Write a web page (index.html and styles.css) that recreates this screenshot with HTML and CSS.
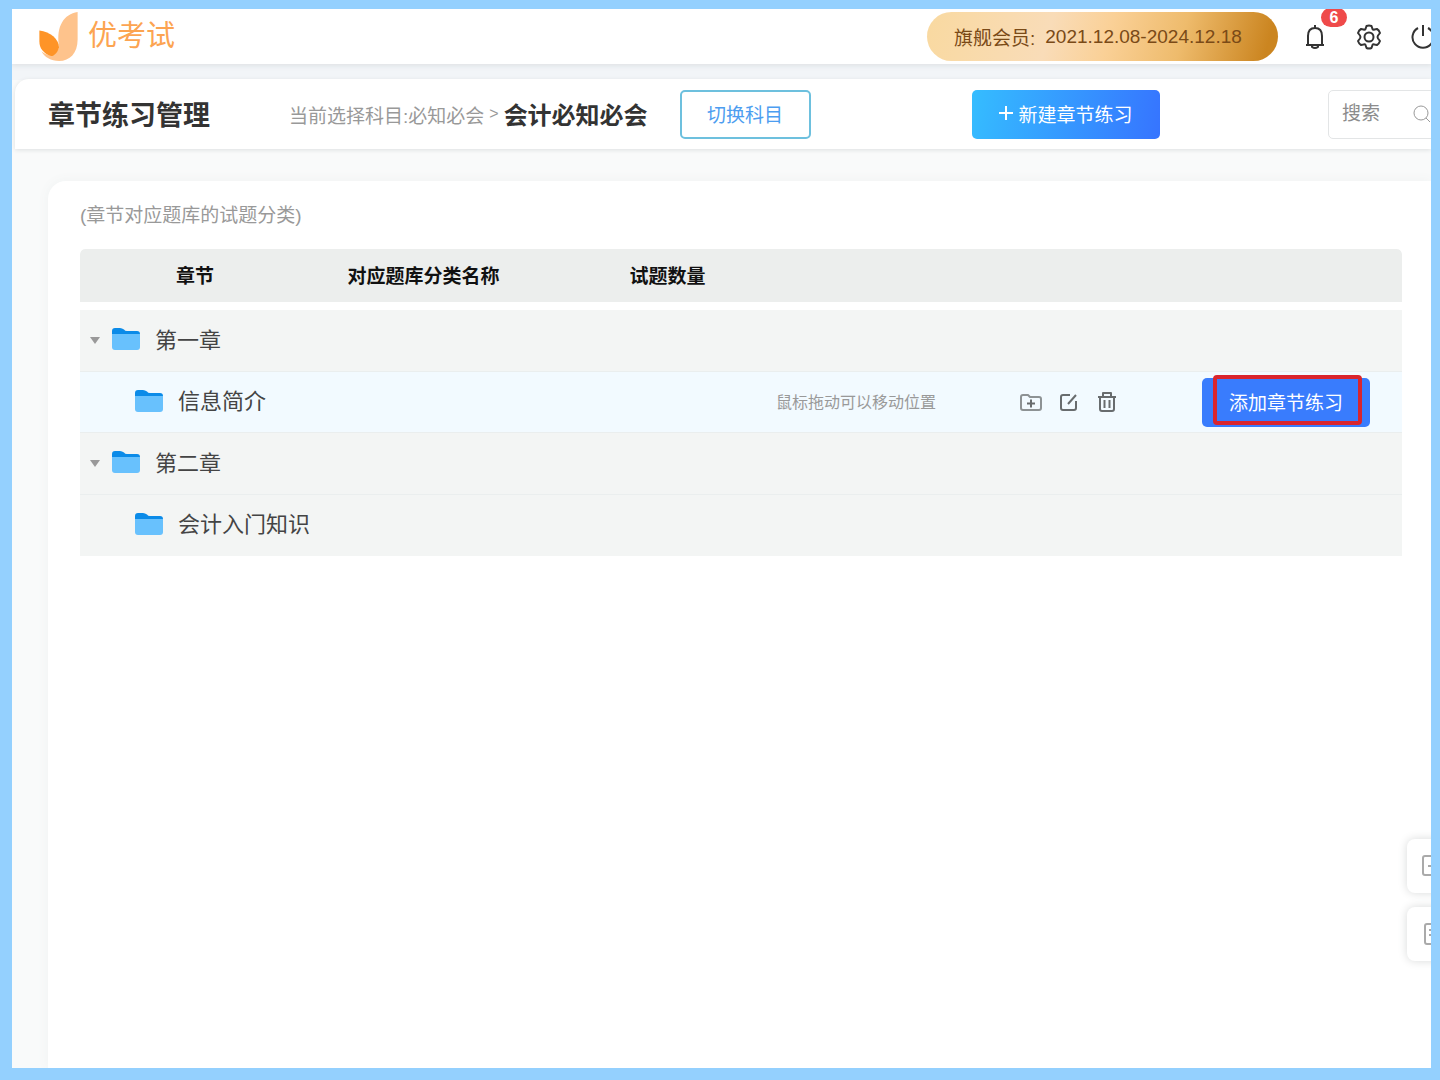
FILE: index.html
```html
<!DOCTYPE html>
<html lang="zh-CN">
<head>
<meta charset="utf-8">
<meta name="viewport" content="width=device-width, initial-scale=1">
<title>章节练习管理 - 优考试</title>
<link rel="stylesheet" href="styles.css">
</head>
<body>
<svg class="sprite" aria-hidden="true">
  <symbol id="folder" viewBox="0 0 28 22">
    <path d="M0 3Q0 0 3 0H8Q10 0 12 1.500Q13 3 15 3H25Q28 3 28 6V12H0Z" fill="#0b8be8"/>
    <path d="M0 6H28V19Q28 22 25 22H3Q0 22 0 19Z" fill="#68c1fd"/>
  </symbol>
</svg>
<div class="app">
  <header class="topbar">
    <a class="logo" href="#">
      <svg class="logo-mark" viewBox="0 0 40 50" aria-hidden="true">
        <path d="M39 0V28C39 42 31 50 20 50C12 50 5 46 2 40C10 47 20 43 20 34C17 15 25 2 39 0Z" fill="#fec38c"/>
        <path d="M0 19C11 20 20 28 20 36C19 41 15 45 12 45C4 42 0 37 0 30Z" fill="#fe9427"/>
      </svg>
      <span>优考试</span>
    </a>
    <div class="member"><span>旗舰会员:</span><span>2021.12.08-2024.12.18</span></div>
    <nav class="top-actions">
      <button class="icon-btn" aria-label="消息">
        <svg viewBox="0 0 24 24"><path d="M3 20H21M5 20V11C5 5 8 3 12 3S19 5 19 11V20M12 0V3"/><path d="M9 21V22Q12 24 15 22V21"/></svg>
        <span class="badge">6</span>
      </button>
      <button class="icon-btn" aria-label="设置">
        <svg viewBox="0 0 24 24"><path d="M8.500 4L9.500 1Q12 0 14.500 1L15.500 4Q16 5 17.500 4.500L20 4Q22 5 23 8L21 10.500Q20 12 21 13.500L23 16Q22 19 20 20L17.500 19.500Q16 19 15.500 20L14.500 23Q12 24 9.500 23L8.500 20Q8 19 6.500 19.500L4 20Q2 19 1 16L3 13.500Q4 12 3 10.500L1 8Q2 5 4 4L6.500 4.500Q8 5 8.500 4Z"/><circle cx="12" cy="12" r="4.500"/></svg>
      </button>
      <button class="icon-btn" aria-label="退出">
        <svg viewBox="0 0 24 24"><path d="M12 0V11M7 3A10.500 10.500 0 1 0 17 3"/></svg>
      </button>
    </nav>
  </header>

  <section class="titlebar">
    <h1>章节练习管理</h1>
    <div class="crumb"><span>当前选择科目:必知必会</span><span class="sep">&gt;</span><strong>会计必知必会</strong></div>
    <button class="btn btn-outline">切换科目</button>
    <button class="btn btn-create"><svg viewBox="0 0 14 14" aria-hidden="true"><path d="M7 0V14M0 7H14"/></svg>新建章节练习</button>
    <label class="search">
      <input type="text" placeholder="搜索" aria-label="搜索">
      <svg viewBox="0 0 18 18" aria-hidden="true"><circle cx="8" cy="8" r="7"/><path d="M13 13L17 17"/></svg>
    </label>
  </section>

  <main class="card">
    <p class="note">(章节对应题库的试题分类)</p>
    <table class="chapters">
      <colgroup><col class="c-name"><col class="c-bank"><col class="c-count"><col></colgroup>
      <thead>
        <tr><th>章节</th><th>对应题库分类名称</th><th>试题数量</th><th></th></tr>
      </thead>
      <tbody>
        <tr class="group">
          <td colspan="2"><div class="name"><i class="caret"></i><svg class="folder"><use href="#folder"/></svg>第一章</div></td>
          <td colspan="2"></td>
        </tr>
        <tr class="child active">
          <td colspan="2"><div class="name"><svg class="folder"><use href="#folder"/></svg>信息简介</div></td>
          <td colspan="2">
            <div class="tools">
              <span class="hint">鼠标拖动可以移动位置</span>
              <div class="tool-icons">
                <button class="tool" aria-label="新建子章节"><svg viewBox="0 0 22 20"><path d="M1 16V5Q1 3 3 3H8L10 5H19Q21 5 21 7V16Q21 18 19 18H3Q1 18 1 16Z" stroke="#8d9294"/><path d="M11 7.500V15.500M7 11.500H15"/></svg></button>
                <button class="tool" aria-label="编辑"><svg viewBox="0 0 22 20"><path d="M12 3H5Q3 3 3 5V16Q3 18 5 18H16Q18 18 18 16V9M10 12L18 3"/></svg></button>
                <button class="tool" aria-label="删除"><svg viewBox="0 0 22 20"><path d="M2 5H20M7 4V1H15V4M4 5V17Q4 19 6 19H16Q18 19 18 17V5M8.500 8V16M13.500 8V16"/></svg></button>
              </div>
              <div class="marked"><button class="btn btn-add">添加章节练习</button></div>
            </div>
          </td>
        </tr>
        <tr class="group">
          <td colspan="2"><div class="name"><i class="caret"></i><svg class="folder"><use href="#folder"/></svg>第二章</div></td>
          <td colspan="2"></td>
        </tr>
        <tr class="child">
          <td colspan="2"><div class="name"><svg class="folder"><use href="#folder"/></svg>会计入门知识</div></td>
          <td colspan="2"></td>
        </tr>
      </tbody>
    </table>
  </main>

  <aside class="float">
    <button aria-label="客服"><svg viewBox="0 0 22 22"><rect x="1" y="1" width="20" height="19" rx="2"/><path d="M6 11H9M13 11H16"/></svg></button>
    <button aria-label="反馈"><svg viewBox="0 0 22 22"><rect x="3" y="1" width="18" height="20" rx="2"/><path d="M7 7H16M7 12H16"/></svg></button>
  </aside>
</div>
</body>
</html>
```
FILE: styles.css
```css
* { box-sizing: border-box; }

body {
  margin: 0;
  min-height: 100vh;
  padding: 9px 9px 12px 12px;
  display: flex;
  background: #94d0fe;
  font-family: "Liberation Sans", "Noto Sans CJK SC", sans-serif;
  font-size: 19px;
  color: #333;
}

button, input { font: inherit; color: inherit; }
button { border: 0; padding: 0; background: none; cursor: pointer; }
svg { display: block; flex: none; fill: none; }
.sprite { position: absolute; width: 0; height: 0; }

.app {
  position: relative;
  flex: 1;
  min-width: 0;
  overflow: hidden;
  display: flex;
  flex-direction: column;
  background: #f9fafa;
}

.topbar {
  flex: none;
  height: 55px;
  padding-left: 27px;
  display: flex;
  align-items: center;
  background: #fff;
  box-shadow: 0 1px 5px 1px #dfe2e5, 0 0 0 16px #f2f5f8;
}

.logo {
  display: flex;
  align-items: center;
  gap: 9px;
  color: #fca451;
  font-size: 29px;
  line-height: 40px;
  text-decoration: none;
}
.logo-mark { width: 40px; height: 49px; }
.logo span { padding-bottom: 2px; }

.member {
  margin-left: auto;
  width: 351px;
  height: 49px;
  padding-left: 27px;
  display: flex;
  align-items: center;
  gap: 10px;
  border-radius: 25px;
  background: linear-gradient(105deg, #f9d9a0 0%, #f9dcb8 35%, #fad096 52%, #eebb6c 72%, #cb8520 96%);
  color: #7a4a17;
}

.top-actions {
  display: flex;
  gap: 30px;
  margin-left: 25px;
  margin-right: -4px;
}
.icon-btn { position: relative; width: 24px; height: 24px; }
.icon-btn svg {
  width: 24px;
  height: 24px;
  overflow: visible;
  stroke: #333;
  stroke-width: 2;
  stroke-linejoin: round;
}
.badge {
  position: absolute;
  left: 18px;
  top: -17px;
  width: 26px;
  height: 19px;
  border-radius: 10px;
  background: #ef4a4a;
  color: #fff;
  font-size: 16px;
  font-weight: 700;
  line-height: 19px;
}

.titlebar {
  position: relative;
  flex: none;
  height: 70px;
  margin: 15px 0 0 3px;
  padding-left: 33px;
  display: flex;
  align-items: center;
  border-radius: 14px 0 0 0;
  background: #fff;
  box-shadow: 0 1px 4px #dcdfe0;
}
h1 { margin: 0; padding-top: 3px; font-size: 27px; line-height: 40px; }
.crumb {
  display: flex;
  align-items: center;
  gap: 5px;
  margin-left: 79px;
  color: #999;
}
.sep { font-size: 16px; }
.crumb strong { padding-top: 3px; color: #333; font-size: 24px; line-height: 36px; }

.btn {
  height: 49px;
  padding-bottom: 2px;
  border-radius: 5px;
  display: flex;
  align-items: center;
  justify-content: center;
  white-space: nowrap;
}
.btn-outline {
  width: 131px;
  margin-left: 32px;
  border: 2px solid #6dc0de;
  color: #4c9df0;
}
.btn-create {
  width: 188px;
  margin-left: auto;
  gap: 5px;
  background: linear-gradient(100deg, #35bdff, #3674ff);
  color: #fff;
}
.btn-create svg { width: 14px; height: 14px; stroke: #fff; stroke-width: 2; }

.search {
  width: 152px;
  height: 49px;
  margin-left: 168px;
  margin-right: -49px;
  padding-left: 13px;
  display: flex;
  align-items: center;
  border: 1px solid #e3e5e6;
  border-radius: 5px;
}
.search input {
  width: 71px;
  padding: 0;
  border: 0;
  outline: 0;
  background: none;
}
.search input::placeholder { color: #8c8c8c; }
.search svg { width: 18px; height: 18px; stroke: #999; }

.card {
  flex: 1;
  margin: 32px 0 0 36px;
  padding: 21px 29px 32px 32px;
  border-radius: 18px 0 0 0;
  background: #fff;
  box-shadow: 0 0 12px #eff2f2;
}
.note { margin: 0 0 19px; color: #999; line-height: 28px; }

.chapters {
  width: 100%;
  table-layout: fixed;
  border-spacing: 0;
}
.c-name { width: 230px; }
.c-bank { width: 227px; }
.c-count { width: 261px; }
th {
  height: 61px;
  padding: 2px 0 0;
  border-bottom: 8px solid transparent;
  background: #eceeed;
  background-clip: padding-box;
  color: #111;
  line-height: 28px;
}
th:first-child { border-radius: 5px 0 0 0; }
th:last-child { border-radius: 0 5px 0 0; }
td {
  padding: 0;
  background: #f3f5f4;
  border-bottom: 1px solid #eaeeee;
}
.group td { height: 62px; }
.child td { height: 61px; }
.active td { background: #f2faff; }
tr:last-child td { border-bottom-color: #f3f5f4; }

.name {
  display: flex;
  align-items: center;
  padding-left: 10px;
  color: #444;
  font-size: 22px;
  line-height: 32px;
}
.child .name { padding-left: 55px; }
.caret {
  border: 5px solid transparent;
  border-top: 7px solid #999;
  border-bottom: 0;
  margin-right: 12px;
}
.folder { width: 28px; height: 22px; margin: 0 15px 3px 0; }

.tools {
  display: flex;
  align-items: center;
  justify-content: flex-end;
  padding-right: 32px;
}
.hint { padding-bottom: 3px; color: #999; font-size: 16px; }
.tool-icons { display: flex; gap: 16px; margin: 0 84px 0 84px; }
.tool svg {
  width: 22px;
  height: 20px;
  stroke: #686c6e;
  stroke-width: 2;
  stroke-linejoin: round;
}
.marked { position: relative; }
.marked::after {
  content: "";
  position: absolute;
  inset: -3px 8px 2px 11px;
  border: 4px solid #d9252e;
  border-radius: 4px;
  pointer-events: none;
}
.btn-add { width: 168px; background: #397cfd; color: #fff; }

.float {
  position: absolute;
  right: -30px;
  bottom: 107px;
  display: flex;
  flex-direction: column;
  gap: 14px;
}
.float button {
  width: 54px;
  height: 54px;
  padding-left: 15px;
  border-radius: 8px;
  background: #fff;
  box-shadow: 0 0 10px #d8dada;
}
.float svg { width: 22px; height: 22px; stroke: #aaa; stroke-width: 2; }
```
